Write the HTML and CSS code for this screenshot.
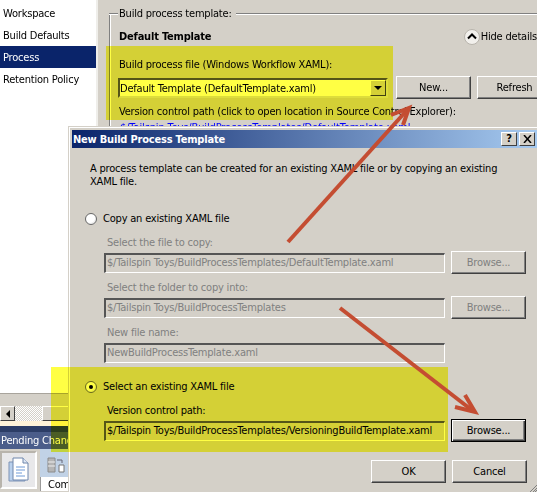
FILE: index.html
```html
<!DOCTYPE html>
<html lang="en">
<head>
<meta charset="utf-8">
<title>New Build Process Template</title>
<link rel="stylesheet" href="styles.css">
</head>
<body>
<div class="desktop">
  <div class="back">
    <aside class="side">
      <nav class="nav">
        <div class="nav-item">Workspace</div>
        <div class="nav-item">Build Defaults</div>
        <div class="nav-item active">Process</div>
        <div class="nav-item">Retention Policy</div>
      </nav>
    </aside>
    <main class="main">
      <div class="legend-row"><span class="legend-tick"></span><span class="legend">Build process template:</span><span class="legend-line"></span></div>
      <div class="main-body">
        <div class="title-row">
          <b class="tpl-name">Default Template</b>
          <span class="hide"><span class="chev"><svg width="10" height="7" viewBox="0 0 10 7"><path d="M1 5.500 5 1.500 9 5.500" fill="none" stroke="#000" stroke-width="2"/></svg></span>Hide details</span>
        </div>
        <div class="file-label">Build process file (Windows Workflow XAML):</div>
        <div class="file-row">
          <div class="combo"><span class="combo-text">Default Template (DefaultTemplate.xaml)</span><span class="combo-btn"><span class="tri"></span></span></div>
          <div class="btn wide-gap">New...</div>
          <div class="btn">Refresh</div>
        </div>
        <div class="vc-label">Version control path (click to open location in Source Control Explorer):</div>
        <div class="link">$/Tailspin Toys/BuildProcessTemplates/DefaultTemplate.xaml</div>
      </div>
    </main>
  </div>

  <div class="foot">
    <div class="scroll"><span class="scroll-btn"><span class="tri-left"></span></span><span class="scroll-track"></span><span class="scroll-thumb"></span></div>
    <div class="cream"></div>
    <div class="navy"></div>
    <div class="pending">Pending Changes</div>
    <div class="tool">
      <div class="tool-tab">
        <svg width="24" height="26" viewBox="0 0 24 26"><path d="M2 5h12l4 4v15H2z" fill="#b9d0ec" stroke="#7f93b5"/><path d="M6 1h10l5 5v17H6z" fill="#fff" stroke="#6f86ab"/><path d="M16 1v5h5" fill="#dfe8f5" stroke="#6f86ab"/><path d="M9 10h9M9 13h9M9 16h6M9 19h9" stroke="#6f9ad6"/></svg>
      </div>
      <div class="tool-panel">
        <svg class="tool-icon" width="18" height="16" viewBox="0 0 18 16"><path d="M1 1h7v14H1z" fill="#b5b5b5" stroke="#8a8a8a"/><path d="M1 5h7M1 9h7" stroke="#eee"/><path d="M12 8h5v7h-5z" fill="#fff" stroke="#777"/><path d="M10 3h5v3" fill="none" stroke="#667"/></svg>
        <div class="tool-tabtext">Com</div>
      </div>
    </div>
  </div>

  <span class="hl hl-top"></span>

  <section class="dialog">
    <header class="titlebar">
      <span class="title">New Build Process Template</span>
      <span class="tb-btns"><span class="tb-btn">?</span><span class="tb-btn"><svg width="9" height="8" viewBox="0 0 9 8"><path d="M1 0 8 8M8 0 1 8" stroke="#000" stroke-width="1.500"/></svg></span></span>
    </header>
    <div class="dlg-body">
      <p class="intro">A process template can be created for an existing XAML file or by copying an existing<br>XAML file.</p>
      <label class="radio-row first"><span class="radio"></span>Copy an existing XAML file</label>
      <div class="fields">
        <div class="field-label muted">Select the file to copy:</div>
        <div class="field-row"><div class="input muted">$/Tailspin Toys/BuildProcessTemplates/DefaultTemplate.xaml</div><div class="btn disabled">Browse...</div></div>
        <div class="field-label muted">Select the folder to copy into:</div>
        <div class="field-row"><div class="input muted">$/Tailspin Toys/BuildProcessTemplates</div><div class="btn disabled">Browse...</div></div>
        <div class="field-label muted">New file name:</div>
        <div class="field-row"><div class="input muted">NewBuildProcessTemplate.xaml</div></div>
      </div>
      <label class="radio-row second"><span class="radio on"></span>Select an existing XAML file</label>
      <div class="fields">
        <div class="field-label">Version control path:</div>
        <div class="field-row"><div class="input live">$/Tailspin Toys/BuildProcessTemplates/VersioningBuildTemplate.xaml</div><div class="btn focus">Browse...</div></div>
      </div>
      <div class="actions"><div class="btn">OK</div><div class="btn">Cancel</div></div>
    </div>
    <svg class="grip" width="7" height="7" viewBox="0 0 7 7"><path d="M7 0 0 7M7 3 3 7M7 5 5 7" stroke="#808080"/></svg>
  </section>

  <span class="hl hl-bottom"></span>

  <svg class="arrows" width="537" height="492" viewBox="0 0 537 492">
    <g fill="none" stroke="#c44d32" stroke-width="4">
      <path d="M288 242 408 109"/>
      <path d="M391 115 409 108 403 125"/>
      <path d="M340 308 473 411"/>
      <path d="M455 407 475 412 465 395"/>
    </g>
  </svg>
</div>
</body>
</html>
```
FILE: styles.css
```css
* { box-sizing: border-box; }
html, body { margin: 0; padding: 0; }
body { background: #d4d0c8; }
.desktop {
  position: relative;
  width: 537px;
  height: 492px;
  overflow: hidden;
  background: #d4d0c8;
  font: 11px/13px "DejaVu Sans Condensed", "DejaVu Sans", sans-serif;
  font-stretch: condensed;
  letter-spacing: -0.2px;
  color: #000;
}
.back { display: flex; height: 394px; border-bottom: 1px solid #a8a49c; }
.side { width: 98px; flex: none; background: #fff; border-right: 2px solid #efeeea; padding-top: 2px; }
.nav-item { height: 22px; line-height: 23px; padding-left: 3px; }
.nav-item.active { background: #0a246a; color: #fff; }
.main { flex: 1; min-width: 0; padding: 7px 0 0 11px; }
.legend-row { display: flex; align-items: center; height: 13px; }
.legend-tick { width: 9px; height: 2px; border-top: 1px solid #808080; border-bottom: 1px solid #fff; }
.legend { padding: 0 4px 0 1px; }
.legend-line { flex: 1; height: 2px; border-top: 1px solid #808080; border-bottom: 1px solid #fff; }
.main-body { border-left: 1px solid #808080; box-shadow: inset 1px 0 0 #fff; padding: 14px 0 0 9px; margin-top: -6px; height: 120px; }
.title-row { display: flex; align-items: center; justify-content: space-between; height: 17px; }
.tpl-name { font-weight: 700; }
.hide { display: flex; align-items: center; gap: 1px; white-space: nowrap; }
.chev { width: 16px; height: 16px; border-radius: 50%; background: #f2f0ec; border: 1px solid #b8b4ac; display: flex; align-items: center; justify-content: center; }
.file-label { margin-top: 13px; }
.file-row { display: flex; gap: 6px; margin-top: 5px; margin-left: -1px; margin-right: -70px; align-items: center; }
.combo { width: 270px; height: 20px; flex: none; display: flex; background: #fff; border: 2px solid; border-color: #555 #ddd #ddd #555; }
.combo-text { flex: 1; line-height: 17px; }
.combo-btn { width: 16px; background: #d4d0c8; border: 1px solid; border-color: #fff #404040 #404040 #fff; display: flex; align-items: center; justify-content: center; }
.tri { border: 4px solid transparent; border-top-color: #000; border-bottom: 0; }
.btn {
  width: 75px; height: 23px; flex: none; line-height: 21px; text-align: center;
  background: #d4d0c8;
  border: 1px solid; border-color: #fff #404040 #404040 #fff;
  box-shadow: inset -1px -1px 0 #808080;
}
.btn.wide-gap { margin-left: 2px; }
.btn.disabled { color: #808080; }
.btn.focus { border-color: #000; box-shadow: inset 1px 1px 0 #fff, inset -1px -1px 0 #404040, inset -2px -2px 0 #808080; }
.vc-label { margin-top: 6px; white-space: nowrap; }
.link { color: #00f; margin-top: 3px; margin-left: 1px; letter-spacing: -0.13px; white-space: nowrap; }

.foot { height: 97px; }
.scroll { display: flex; height: 15px; margin-top: 12px; }
.scroll-btn { width: 15px; background: #d4d0c8; border: 1px solid; border-color: #fff #404040 #404040 #fff; display: flex; align-items: center; justify-content: center; }
.tri-left { border: 4px solid transparent; border-right-color: #000; border-left: 0; }
.scroll-track { width: 27px; background: repeating-conic-gradient(#fff 0 25%, #d4d0c8 0 50%) 0 0 / 2px 2px; }
.scroll-thumb { width: 30px; background: #d4d0c8; border: 1px solid; border-color: #fff #404040 #404040 #fff; }
.cream { height: 5px; background: #fff3d8; }
.navy { height: 6px; background: #2c3d66; }
.pending { height: 17px; line-height: 17px; background: #4b5d8a; color: #fff; padding-left: 1px; white-space: nowrap; overflow: hidden; }
.tool { display: flex; height: 42px; gap: 3px; }
.tool-tab { width: 37px; height: 38px; margin-top: 2px; flex: none; background: #e8e8ea; border: 2px solid #b8b4ac; border-bottom-color: #fff; border-right-color: #fff; display: flex; align-items: center; justify-content: center; }
.tool-panel { flex: 1; background: #c1d2e6; padding: 8px 0 0 7px; position: relative; }
.tool-icon { display: block; }
.tool-tabtext { position: absolute; left: 0; right: 0; bottom: 0; padding: 2px 0 0 7px; height: 14px; line-height: 12px; background: #fff; border-left: 1px solid #999; white-space: nowrap; overflow: hidden; }

.dialog {
  position: absolute; left: 68px; top: 126px; width: 469px; height: 366px;
  background: #d4d0c8;
  border-top: 1px solid #d4d0c8; border-left: 1px solid #d4d0c8;
  box-shadow: inset 1px 1px 0 #fff;
  padding: 3px 0 0 3px;
}
.titlebar {
  height: 18px; display: flex; align-items: center; justify-content: space-between;
  background: linear-gradient(90deg, #0a246a, #a6caf0); color: #fff; padding: 0 2px 0 1px;
}
.title { font-weight: 700; }
.tb-btns { display: flex; gap: 2px; }
.tb-btn {
  width: 16px; height: 14px; display: flex; align-items: center; justify-content: center;
  background: #d4d0c8; color: #000; font-weight: 700; line-height: 12px;
  border: 1px solid; border-color: #fff #404040 #404040 #fff;
}
.dlg-body { padding: 14px 0 0 18px; }
.intro { margin: 0; }
.radio-row { display: flex; align-items: center; gap: 6px; height: 13px; margin-left: -5px; }
.radio-row.first { margin-top: 24px; }
.radio-row.second { margin-top: 16px; }
.radio { width: 12px; height: 12px; border-radius: 50%; background: #fff; border: 1px solid #666; box-shadow: inset -1px -1px 0 #eee; flex: none; display: flex; align-items: center; justify-content: center; }
.radio.on::after { content: ""; width: 4px; height: 4px; border-radius: 50%; background: #000; }
.fields { margin-top: 11px; padding-left: 14px; }
.field-label { padding-left: 3px; height: 13px; margin-bottom: 2px; }
.muted { color: #808080; }
.field-row { display: flex; gap: 6px; height: 23px; margin-bottom: 7px; align-items: center; }
.input { width: 341px; height: 20px; flex: none; line-height: 16px; padding-left: 1px; border-style: solid; border-color: #555 #fff #fff #555; border-width: 2px 1px 1px 2px; background: #d4d0c8; white-space: nowrap; overflow: hidden; }
.actions { display: flex; gap: 6px; justify-content: flex-end; width: 437px; margin-top: 18px; }
.grip { position: absolute; right: 0; bottom: 0; }

.hl { position: absolute; background: #ffff44; mix-blend-mode: multiply; }
.hl-top { left: 106px; top: 46px; width: 287px; height: 74px; }
.hl-bottom { left: 51px; top: 367px; width: 397px; height: 85px; }
.arrows { position: absolute; left: 0; top: 0; pointer-events: none; }
```
